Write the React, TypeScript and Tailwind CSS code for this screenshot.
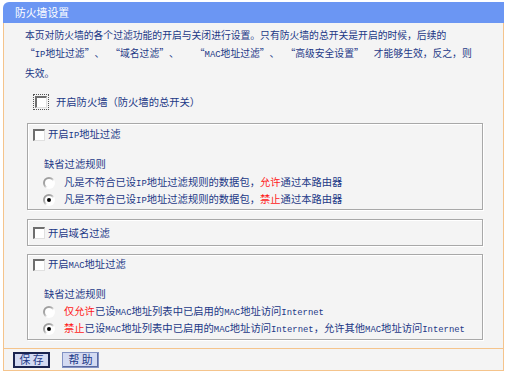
import React from "react";

const CJK = { fontFamily: '"Noto Sans CJK SC", "Noto Sans", sans-serif' };

function A({ children }: { children: React.ReactNode }) {
  return <span className="font-['Liberation_Mono',monospace] text-[8.9px]">{children}</span>;
}

function Q({ open }: { open?: boolean }) {
  return open ? (
    <span className="inline-block w-[1em] text-right">{"\u201c"}</span>
  ) : (
    <span className="inline-block w-[1em] text-left">{"\u201d"}</span>
  );
}

function CheckBox() {
  return (
    <span className="inline-block w-[12px] h-[12px] bg-white border-t-2 border-l-2 border-[#6e6e6e] border-b border-r border-b-[#e0e0e0] border-r-[#e0e0e0] box-border shrink-0" />
  );
}

function Radio({ checked }: { checked?: boolean }) {
  return (
    <span className="relative inline-block w-[12px] h-[12px] rounded-full shrink-0 bg-[linear-gradient(135deg,#8a8a8a_0%,#b0b0b0_45%,#ffffff_60%,#ffffff_100%)]">
      <span className="absolute left-[2px] top-[2px] w-[8px] h-[8px] rounded-full bg-white flex items-center justify-center">
        {checked ? <span className="w-[4px] h-[4px] rounded-full bg-black" /> : null}
      </span>
    </span>
  );
}

export default function App() {
  return (
    <div className="w-[510px] h-[375px] bg-white pt-[2px] pl-[3px] text-[#1c3886]" style={CJK}>
      <div className="w-[501px]">
        <div className="h-[21px] bg-[#6b96f3] rounded-tl-[6px] text-white text-[10.8px] flex items-center pl-[12px]">
          防火墙设置
        </div>
        <div className="bg-[#f4f4f4] border-x border-[#f5c48c] pb-[8px]">
          <div className="pl-[21px] pt-[3px] leading-[18px] text-[9.8px] whitespace-nowrap">
            本页对防火墙的各个过滤功能的开启与关闭进行设置。只有防火墙的总开关是开启的时候，后续的
            <br />
            <Q open /><A>IP</A>地址过滤<Q />、<span className="inline-block w-[6px]" /><Q open />域名过滤<Q />、<span className="inline-block w-[16px]" /><Q open /><A>MAC</A>地址过滤<Q />、<span className="inline-block w-[6px]" /><Q open />高级安全设置<Q /><span className="inline-block w-[10px]" />才能够生效，反之，则
            <br />
            失效。
          </div>
          <div className="mt-[11px] h-[17px] flex items-center pl-[29px] text-[10.3px]">
            <span className="border border-dotted border-[#555] p-[1px] flex">
              <CheckBox />
            </span>
            <span className="ml-[7px]">开启防火墙（防火墙的总开关）</span>
          </div>

          <div className="ml-[23px] w-[456px] h-[87px] mt-[13px] border border-[#a8a8a8] shadow-[inset_1px_1px_0_#ffffff,1px_1px_0_#ffffff] pt-[2px] text-[10.3px]">
            <div className="h-[17px] flex items-center pl-[5px]">
              <CheckBox />
              <span className="ml-[3px]">开启<A>IP</A>地址过滤</span>
            </div>
            <div className="mt-[12px] h-[17px] flex items-center pl-[16px]">缺省过滤规则</div>
            <div className="mt-[2px] h-[17px] flex items-center pl-[15px]">
              <Radio />
              <span className="ml-[9px]">凡是不符合已设<A>IP</A>地址过滤规则的数据包，<span className="text-[#ff1a1a]">允许</span>通过本路由器</span>
            </div>
            <div className="h-[17px] flex items-center pl-[15px]">
              <Radio checked />
              <span className="ml-[9px]">凡是不符合已设<A>IP</A>地址过滤规则的数据包，<span className="text-[#ff1a1a]">禁止</span>通过本路由器</span>
            </div>
          </div>

          <div className="ml-[23px] w-[456px] h-[27px] mt-[9px] border border-[#a8a8a8] shadow-[inset_1px_1px_0_#ffffff,1px_1px_0_#ffffff] flex items-center pl-[5px] text-[10.3px]">
            <CheckBox />
            <span className="ml-[3px]">开启域名过滤</span>
          </div>

          <div className="ml-[23px] w-[456px] h-[86px] mt-[8px] border border-[#a8a8a8] shadow-[inset_1px_1px_0_#ffffff,1px_1px_0_#ffffff] pt-[1px] text-[10.3px]">
            <div className="h-[17px] flex items-center pl-[5px]">
              <CheckBox />
              <span className="ml-[3px]">开启<A>MAC</A>地址过滤</span>
            </div>
            <div className="mt-[12px] h-[17px] flex items-center pl-[16px]">缺省过滤规则</div>
            <div className="mt-[1px] h-[17px] flex items-center pl-[15px]">
              <Radio />
              <span className="ml-[9px] whitespace-nowrap"><span className="text-[#ff1a1a]">仅允许</span>已设<A>MAC</A>地址列表中已启用的<A>MAC</A>地址访问<A>Internet</A></span>
            </div>
            <div className="h-[17px] flex items-center pl-[15px]">
              <Radio checked />
              <span className="ml-[9px] whitespace-nowrap"><span className="text-[#ff1a1a]">禁止</span>已设<A>MAC</A>地址列表中已启用的<A>MAC</A>地址访问<A>Internet</A>，允许其他<A>MAC</A>地址访问<A>Internet</A></span>
            </div>
          </div>
        </div>
        <div className="h-[23px] bg-[#f4f4f4] border border-[#f5c48c] flex items-center pl-[9px] gap-[12px] text-[10.8px]">
          <button className="h-[16px] w-[37px] bg-[#d3daf2] border-2 border-[#1a2450] flex items-center justify-center text-[#1c3886] leading-none">
            保&nbsp;存
          </button>
          <button className="h-[16px] w-[37px] bg-[#d3daf2] border border-[#8292c4] shadow-[inset_-1px_-1px_0_#5b6aa0] flex items-center justify-center text-[#1c3886] leading-none">
            帮&nbsp;助
          </button>
        </div>
      </div>
    </div>
  );
}
